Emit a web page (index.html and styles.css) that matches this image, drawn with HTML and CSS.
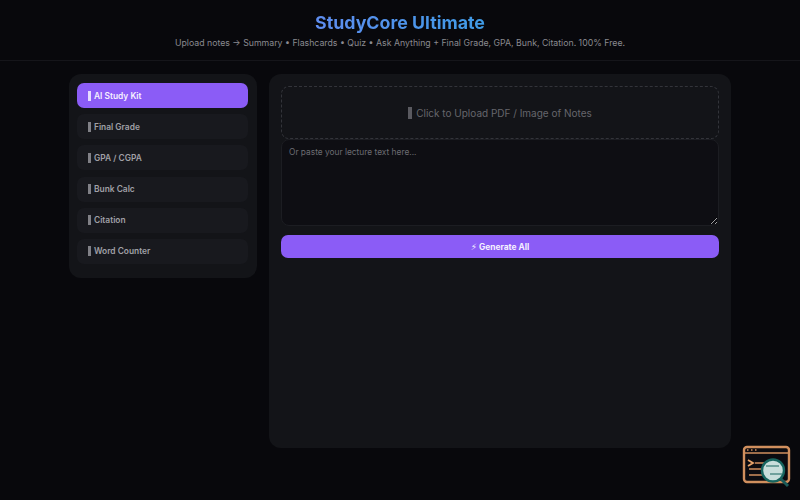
FILE: index.html
```html
<!DOCTYPE html>
<html lang="en">
<head>
    <meta charset="UTF-8">
    <meta name="viewport" content="width=device-width, initial-scale=1.0">
    <title>StudyCore Ultimate</title>
    <link rel="stylesheet" href="styles.css">
</head>
<body>

<header class="header">
    <h1>StudyCore Ultimate</h1>
    <p>Upload notes → Summary • Flashcards • Quiz • Ask Anything + Final Grade, GPA, Bunk, Citation. 100% Free.</p>
</header>

<div class="container">
    <!-- Tool list -->
    <nav class="sidebar">
        <button class="nav-btn active"><span class="tofu"></span>AI Study Kit</button>
        <button class="nav-btn"><span class="tofu"></span>Final Grade</button>
        <button class="nav-btn"><span class="tofu"></span>GPA / CGPA</button>
        <button class="nav-btn"><span class="tofu"></span>Bunk Calc</button>
        <button class="nav-btn"><span class="tofu"></span>Citation</button>
        <button class="nav-btn"><span class="tofu"></span>Word Counter</button>
    </nav>

    <!-- AI Study Kit panel -->
    <main class="panel">
        <div class="upload"><span class="tofu tofu-big"></span>Click to Upload PDF / Image of Notes</div>
        <textarea class="notes" placeholder="Or paste your lecture text here..."></textarea>
        <button class="generate"><span class="bolt">⚡&#xFE0E;</span> Generate All</button>
    </main>
</div>

<!-- Corner badge -->
<svg class="badge" width="50" height="46" viewBox="0 0 50 46">
    <rect x="3" y="3" width="45" height="35" rx="3" fill="#0b0b10" stroke="#d08f5e" stroke-width="2.4"/>
    <line x1="3" y1="9" x2="48" y2="9" stroke="#d08f5e" stroke-width="1.6"/>
    <path d="M6 6h1.5M10 6h1.5M14 6h1.5" stroke="#d08f5e" stroke-width="1.4"/>
    <path d="M7 16l5 3-5 3" fill="none" stroke="#e8a46c" stroke-width="1.8"/>
    <path d="M14 19h9M8 25h13M8 31h13" fill="none" stroke="#d08f5e" stroke-width="1.6"/>
    <circle cx="32" cy="26.5" r="11" fill="#c8dedb" stroke="#17655f" stroke-width="2.4"/>
    <path d="M25 22h13M29 30h12" stroke="#17655f" stroke-width="1.2"/>
    <path d="M40 35l7 7" stroke="#1a5a58" stroke-width="3"/>
</svg>

</body>
</html>
```

FILE: styles.css
```css
* {
    box-sizing: border-box;
}

body {
    margin: 0;
    height: 500px;
    overflow: hidden;
    font-family: 'Inter', sans-serif;
    background-color: #08080c;
    color: #e4e4e7;
}

.header {
    height: 61px;
    padding-top: 12px;
    text-align: center;
    border-bottom: 1px solid #15151a;
}

.header h1 {
    margin: 0;
    font-size: 17.8px;
    line-height: 22px;
    font-weight: 700;
    background: linear-gradient(90deg, #5f8df0, #3f9be6);
    -webkit-background-clip: text;
    background-clip: text;
    color: transparent;
    display: inline-block;
}

.header p {
    margin: 3px 0 0;
    font-size: 8.75px;
    line-height: 12px;
    color: #8a8a90;
}

.container {
    display: flex;
    align-items: flex-start;
    gap: 12px;
    width: 662px;
    margin: 13px auto 0;
}

.sidebar {
    width: 188px;
    flex-shrink: 0;
    display: flex;
    flex-direction: column;
    gap: 6.2px;
    padding: 9px 9px 14px 8px;
    background-color: #131418;
    border-radius: 12px;
}

.nav-btn {
    display: flex;
    align-items: center;
    height: 25px;
    padding: 0 11px;
    border: none;
    border-radius: 7px;
    background-color: #18191e;
    color: #a0a0a6;
    font-family: inherit;
    font-size: 8.4px;
    font-weight: 600;
    text-align: left;
}

.nav-btn.active {
    background-color: #8b5cf6;
    color: #f5f0ff;
}

.tofu {
    width: 3px;
    height: 10px;
    margin-right: 3px;
    background-color: #808086;
}

.active .tofu {
    background-color: #e6dcff;
}

.panel {
    flex: 1;
    height: 374px;
    padding: 12px;
    background-color: #131418;
    border-radius: 12px;
}

.upload {
    display: flex;
    align-items: center;
    justify-content: center;
    height: 53px;
    border: 1px dashed #33343a;
    border-radius: 8px;
    color: #66666c;
    font-size: 10px;
}

.tofu-big {
    width: 4px;
    height: 12px;
    margin-right: 4px;
    background-color: #5a5a60;
}

.notes {
    display: block;
    width: 100%;
    height: 87px;
    padding: 7px;
    background-color: #0e0e13;
    border: 1px solid #1c1d22;
    border-radius: 8px;
    color: #e4e4e7;
    font-family: inherit;
    font-size: 8.35px;
    outline: none;
}

.notes::placeholder {
    color: #6c6c72;
}

.generate {
    display: block;
    width: 100%;
    height: 23px;
    margin-top: 9px;
    border: none;
    border-radius: 7px;
    background-color: #8b5cf6;
    color: #f5f0ff;
    font-family: inherit;
    font-size: 8.4px;
    font-weight: 700;
}

.bolt {
    font-family: 'DejaVu Sans', sans-serif;
    font-weight: 400;
    font-size: 9px;
}

.badge {
    position: absolute;
    right: 9px;
    bottom: 10px;
}
```
